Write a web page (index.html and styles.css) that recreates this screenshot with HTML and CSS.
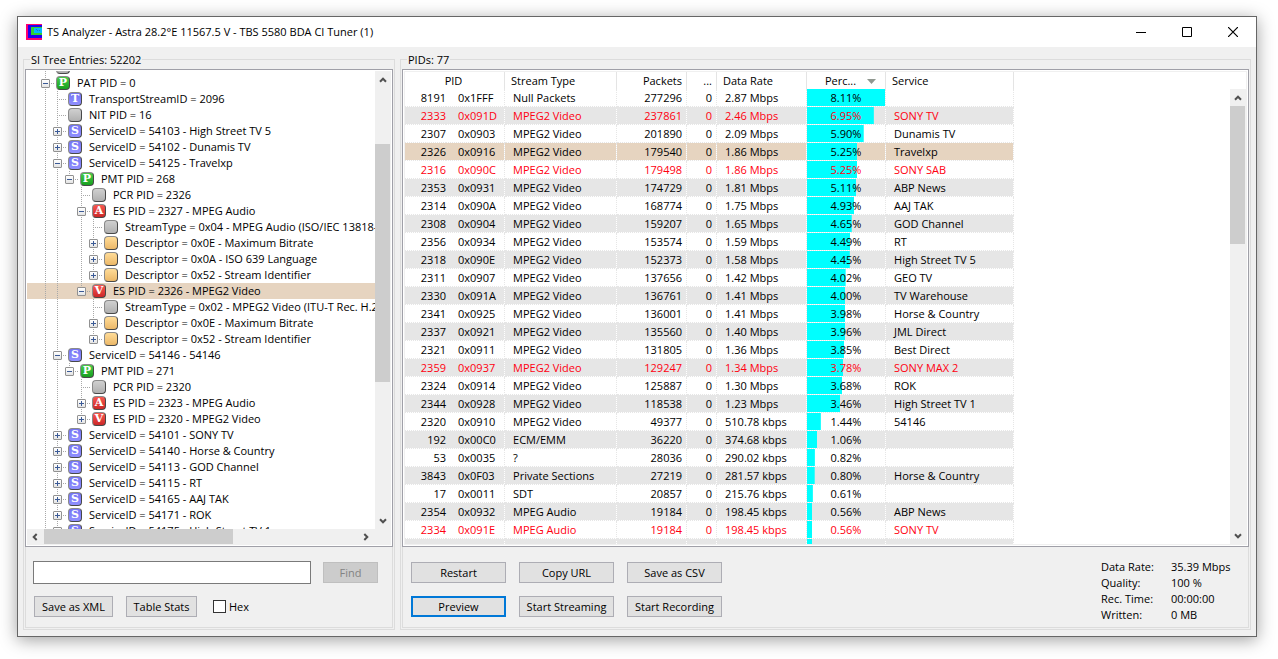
FILE: index.html
```html
<!DOCTYPE html>
<html lang="en">
<head>
    <meta charset="UTF-8">
    <meta name="viewport" content="width=device-width, initial-scale=1.0">
    <title>TS Analyzer</title>
    <link rel="stylesheet" href="styles.css">
</head>
<body>
<svg class="defs" width="0" height="0">
    <symbol id="chevron" viewBox="0 0 8 6"><path d="M1 4.7 L4 1.7 L7 4.7" fill="none" stroke="#505050" stroke-width="2"/></symbol>
</svg>
<div class="window">
    <header class="titlebar">
        <svg class="app-icon" width="16" height="16" viewBox="0 0 16 16" shape-rendering="crispEdges">
            <rect width="16" height="16" fill="#ff0070"/>
            <rect x="2" y="1" width="14" height="13" fill="#2000f0"/>
            <rect x="5" y="3" width="11" height="8" fill="#30d030"/>
            <rect x="8" y="4" width="8" height="5" fill="#00b8ff"/>
            <path d="M10 5h1v1h1v1h-1v-1h-1zM13 6h1v1h-1z" fill="#2070d0"/>
        </svg>
        <h1>TS Analyzer - Astra 28.2°E 11567.5 V - TBS 5580 BDA CI Tuner (1)</h1>
        <button class="caption" aria-label="Minimize"><svg width="10" height="10"><path d="M0 5.5h10" stroke="#000"/></svg></button>
        <button class="caption" aria-label="Maximize"><svg width="10" height="10"><path d="M.5 .5h9v9h-9z" fill="none" stroke="#000"/></svg></button>
        <button class="caption" aria-label="Close"><svg width="10" height="10"><path d="M0 0l10 10M10 0L0 10" stroke="#000" stroke-width="1.2"/></svg></button>
    </header>

    <main>
        <fieldset class="group si">
            <legend>SI Tree Entries: 52202</legend>
            <div class="tree-box">
                <div class="tree-row">
                    <div class="tree-view"><ul class="tree" id="tree"></ul></div>
                    <div class="scroll">
                        <button aria-label="Scroll up"><svg width="8" height="6"><use href="#chevron"/></svg></button>
                        <div class="track tree-v"><span class="thumb"></span></div>
                        <button aria-label="Scroll down"><svg class="down" width="8" height="6"><use href="#chevron"/></svg></button>
                    </div>
                </div>
                <div class="scroll horizontal">
                    <button aria-label="Scroll left"><svg class="left" width="8" height="6"><use href="#chevron"/></svg></button>
                    <div class="track"><span class="thumb"></span></div>
                    <button aria-label="Scroll right"><svg class="right" width="8" height="6"><use href="#chevron"/></svg></button>
                </div>
            </div>
            <div class="panel search">
                <div class="find">
                    <input type="text" aria-label="Search text">
                    <button class="btn" disabled>Find</button>
                </div>
                <div class="tools">
                    <button class="btn">Save as XML</button>
                    <button class="btn">Table Stats</button>
                    <label><input type="checkbox">Hex</label>
                </div>
            </div>
        </fieldset>

        <fieldset class="group pids">
            <legend>PIDs: 77</legend>
            <div class="list-box">
                <div class="list">
                    <table>
                        <colgroup>
                            <col class="c-pid"><col class="c-hex"><col class="c-type"><col class="c-packets">
                            <col class="c-err"><col class="c-rate"><col class="c-percent"><col class="c-service">
                        </colgroup>
                        <thead>
                            <tr>
                                <th colspan="2" class="center">PID</th>
                                <th>Stream Type</th>
                                <th class="num">Packets</th>
                                <th class="num">...</th>
                                <th>Data Rate</th>
                                <th class="sorted">Perc...<svg width="9" height="5"><path d="M0 0h9L4.500 5z" fill="#909890"/></svg></th>
                                <th>Service</th>
                            </tr>
                        </thead>
                        <tbody id="pids"></tbody>
                    </table>
                    <div class="scroll">
                        <button aria-label="Scroll up"><svg width="8" height="6"><use href="#chevron"/></svg></button>
                        <div class="track list-v"><span class="thumb"></span></div>
                        <button aria-label="Scroll down"><svg class="down" width="8" height="6"><use href="#chevron"/></svg></button>
                    </div>
                </div>
            </div>
            <div class="panel actions">
                <div class="buttons">
                    <button class="btn">Restart</button>
                    <button class="btn">Copy URL</button>
                    <button class="btn">Save as CSV</button>
                    <button class="btn default">Preview</button>
                    <button class="btn">Start Streaming</button>
                    <button class="btn">Start Recording</button>
                </div>
                <dl class="stats">
                    <dt>Data Rate:</dt><dd>35.39 Mbps</dd>
                    <dt>Quality:</dt><dd>100 %</dd>
                    <dt>Rec. Time:</dt><dd>00:00:00</dd>
                    <dt>Written:</dt><dd>0 MB</dd>
                </dl>
            </div>
        </fieldset>
    </main>
</div>

<script>
    // first string: one character per level, | = line, . = empty, last one is the node itself
    // t = leaf, + collapsed, - expanded, * and = are the same for the last child
    const nodes = [
        ['t', '', ''],
        ['-', 'P', 'PAT PID = 0'],
        ['|t', 'T', 'TransportStreamID = 2096'],
        ['|t', '', 'NIT PID = 16'],
        ['|+', 'S', 'ServiceID = 54103 - High Street TV 5'],
        ['|+', 'S', 'ServiceID = 54102 - Dunamis TV'],
        ['|-', 'S', 'ServiceID = 54125 - Travelxp'],
        ['||=', 'P', 'PMT PID = 268'],
        ['||.t', '', 'PCR PID = 2326'],
        ['||.-', 'A', 'ES PID = 2327 - MPEG Audio'],
        ['||.|t', '', 'StreamType = 0x04 - MPEG Audio (ISO/IEC 13818-3)'],
        ['||.|+', 'D', 'Descriptor = 0x0E - Maximum Bitrate'],
        ['||.|+', 'D', 'Descriptor = 0x0A - ISO 639 Language'],
        ['||.|*', 'D', 'Descriptor = 0x52 - Stream Identifier'],
        ['||.=', 'V', 'ES PID = 2326 - MPEG2 Video', true],
        ['||..t', '', 'StreamType = 0x02 - MPEG2 Video (ITU-T Rec. H.262)'],
        ['||..+', 'D', 'Descriptor = 0x0E - Maximum Bitrate'],
        ['||..*', 'D', 'Descriptor = 0x52 - Stream Identifier'],
        ['|-', 'S', 'ServiceID = 54146 - 54146'],
        ['||=', 'P', 'PMT PID = 271'],
        ['||.t', '', 'PCR PID = 2320'],
        ['||.+', 'A', 'ES PID = 2323 - MPEG Audio'],
        ['||.*', 'V', 'ES PID = 2320 - MPEG2 Video'],
        ['|+', 'S', 'ServiceID = 54101 - SONY TV'],
        ['|+', 'S', 'ServiceID = 54140 - Horse & Country'],
        ['|+', 'S', 'ServiceID = 54113 - GOD Channel'],
        ['|+', 'S', 'ServiceID = 54115 - RT'],
        ['|+', 'S', 'ServiceID = 54165 - AAJ TAK'],
        ['|+', 'S', 'ServiceID = 54171 - ROK'],
        ['|+', 'S', 'ServiceID = 54175 - High Street TV 1']
    ];

    // pid, hex, type, packets, rate, percent, service, encrypted
    const pids = [
        [8191, '0x1FFF', 'Null Packets', 277296, '2.87 Mbps', 8.11, ''],
        [2333, '0x091D', 'MPEG2 Video', 237861, '2.46 Mbps', 6.95, 'SONY TV', true],
        [2307, '0x0903', 'MPEG2 Video', 201890, '2.09 Mbps', 5.90, 'Dunamis TV'],
        [2326, '0x0916', 'MPEG2 Video', 179540, '1.86 Mbps', 5.25, 'Travelxp'],
        [2316, '0x090C', 'MPEG2 Video', 179498, '1.86 Mbps', 5.25, 'SONY SAB', true],
        [2353, '0x0931', 'MPEG2 Video', 174729, '1.81 Mbps', 5.11, 'ABP News'],
        [2314, '0x090A', 'MPEG2 Video', 168774, '1.75 Mbps', 4.93, 'AAJ TAK'],
        [2308, '0x0904', 'MPEG2 Video', 159207, '1.65 Mbps', 4.65, 'GOD Channel'],
        [2356, '0x0934', 'MPEG2 Video', 153574, '1.59 Mbps', 4.49, 'RT'],
        [2318, '0x090E', 'MPEG2 Video', 152373, '1.58 Mbps', 4.45, 'High Street TV 5'],
        [2311, '0x0907', 'MPEG2 Video', 137656, '1.42 Mbps', 4.02, 'GEO TV'],
        [2330, '0x091A', 'MPEG2 Video', 136761, '1.41 Mbps', 4.00, 'TV Warehouse'],
        [2341, '0x0925', 'MPEG2 Video', 136001, '1.41 Mbps', 3.98, 'Horse & Country'],
        [2337, '0x0921', 'MPEG2 Video', 135560, '1.40 Mbps', 3.96, 'JML Direct'],
        [2321, '0x0911', 'MPEG2 Video', 131805, '1.36 Mbps', 3.85, 'Best Direct'],
        [2359, '0x0937', 'MPEG2 Video', 129247, '1.34 Mbps', 3.78, 'SONY MAX 2', true],
        [2324, '0x0914', 'MPEG2 Video', 125887, '1.30 Mbps', 3.68, 'ROK'],
        [2344, '0x0928', 'MPEG2 Video', 118538, '1.23 Mbps', 3.46, 'High Street TV 1'],
        [2320, '0x0910', 'MPEG2 Video', 49377, '510.78 kbps', 1.44, '54146'],
        [192, '0x00C0', 'ECM/EMM', 36220, '374.68 kbps', 1.06, ''],
        [53, '0x0035', '?', 28036, '290.02 kbps', 0.82, ''],
        [3843, '0x0F03', 'Private Sections', 27219, '281.57 kbps', 0.80, 'Horse & Country'],
        [17, '0x0011', 'SDT', 20857, '215.76 kbps', 0.61, ''],
        [2354, '0x0932', 'MPEG Audio', 19184, '198.45 kbps', 0.56, 'ABP News'],
        [2334, '0x091E', 'MPEG Audio', 19184, '198.45 kbps', 0.56, 'SONY TV', true],
        [2360, '0x0938', 'MPEG Audio', 19183, '198.44 kbps', 0.56, 'SONY MAX 2', true]
    ];
    const selectedPid = 2326;
    const maxPercent = pids[0][5];

    function escapeText(s) {
        return String(s).replace(/&/g, '&amp;');
    }

    function guide(ch) {
        if (ch === '.') return '<span class="guide"></span>';
        if (ch === '|') return '<span class="guide line"></span>';
        const last = ch === '=' || ch === '*' ? ' last' : '';
        let box = '';
        if (ch === '+' || ch === '*') box = '<button class="expander plus" aria-label="Expand"></button>';
        if (ch === '-' || ch === '=') box = '<button class="expander" aria-label="Collapse"></button>';
        return `<span class="guide line node${last}">${box}</span>`;
    }

    document.getElementById('tree').innerHTML = nodes.map(([guides, icon, label, selected]) => `
        <li class="${selected ? 'selected' : ''}">
            ${[...guides].map(guide).join('')}<span class="icon icon-${icon || 'none'}">${icon === 'D' ? '' : icon}</span><span class="label">${escapeText(label)}</span>
        </li>`).join('');

    document.getElementById('pids').innerHTML = pids.map(([pid, hex, type, packets, rate, percent, service, encrypted]) => `
        <tr class="${pid === selectedPid ? 'selected' : ''} ${encrypted ? 'encrypted' : ''}">
            <td class="num pid">${pid}</td><td class="hex">${hex}</td><td>${type}</td>
            <td class="num">${packets}</td><td class="num">0</td><td>${rate}</td>
            <td class="percent" style="background-size: ${percent / maxPercent * 100}% 100%">${percent.toFixed(2)}%</td>
            <td>${escapeText(service)}</td>
        </tr>`).join('');
</script>
</body>
</html>
```
FILE: styles.css
```css
* {
    box-sizing: border-box;
}
body {
    margin: 0;
    height: 100vh;
    padding: 16px 21px 22px 17px;
    background: white;
    color: black;
    font-family: "Open Sans", "Noto Sans", sans-serif;
    font-size: 11px;
    line-height: 16px;
    overflow: hidden;
}
button, input {
    font: inherit;
    color: inherit;
}
.defs {
    position: absolute;
}
.window {
    height: 100%;
    display: flex;
    flex-direction: column;
    background: #f0f0f0;
    border: 1px solid #666;
    box-shadow: 0 3px 16px rgba(0, 0, 0, 0.38);
}
.titlebar {
    display: flex;
    align-items: center;
    height: 30px;
    padding-left: 8px;
    background: white;
}
.titlebar h1 {
    flex: 1;
    margin: 0 0 0 5px;
    font-size: 11px;
    font-weight: normal;
}
.caption {
    display: flex;
    align-items: center;
    justify-content: center;
    width: 46px;
    height: 29px;
    padding: 0;
    border: none;
    background: none;
}
main {
    flex: 1;
    min-height: 0;
    display: flex;
    gap: 5px;
    padding: 5px 5px 6px;
}

/* group boxes */
.group {
    display: flex;
    flex-direction: column;
    min-width: 0;
    margin: 0;
    padding: 2px 1px 1px;
    border: 1px solid #dcdcdc;
}
.group legend {
    height: 15px;
    line-height: 15px;
    margin-left: 5px;
    padding: 0 1px;
}
.si {
    width: 372px;
}
.pids {
    flex: 1;
}
.panel {
    height: 81px;
    border: 1px solid #dcdcdc;
    border-top: none;
}
.tree-box, .list-box {
    flex: 1;
    min-height: 0;
    padding: 1px;
    background: white;
    border: 1px solid #a0a0a8;
}

/* tree */
.tree-box {
    display: flex;
    flex-direction: column;
}
.tree-row {
    flex: 1;
    min-height: 0;
    display: flex;
}
.tree-view {
    flex: 1;
    min-width: 0;
    overflow: hidden;
}
.tree {
    list-style: none;
    margin: -12px 0 0;
    padding: 0;
}
.tree li {
    display: flex;
    align-items: center;
    height: 16px;
    padding-left: 12px;
    white-space: nowrap;
    overflow: hidden;
}
.tree .selected, tbody tr.selected td {
    background-color: #e6d4c0;
}
.guide {
    flex: none;
    width: 12px;
    height: 16px;
    background-repeat: no-repeat;
}
.line {
    background-image: repeating-linear-gradient(#a8a8a8 0 1px, transparent 1px 2px);
    background-size: 1px 16px;
    background-position: 6px 0;
}
.node {
    display: flex;
    align-items: center;
    width: 17px;
    padding-left: 2px;
    background-image: repeating-linear-gradient(#a8a8a8 0 1px, transparent 1px 2px), repeating-linear-gradient(90deg, #a8a8a8 0 1px, transparent 1px 2px);
    background-size: 1px 16px, 10px 1px;
    background-position: 6px 0, 6px 8px;
}
.node.last {
    background-size: 1px 8px, 10px 1px;
}
.expander {
    width: 9px;
    height: 9px;
    padding: 0;
    border: 1px solid #919191;
    border-radius: 1px;
    background: linear-gradient(#3b5a96, #3b5a96) center / 5px 1px no-repeat, linear-gradient(white, #e4e4e4);
}
.plus {
    background: linear-gradient(#3b5a96, #3b5a96) center / 5px 1px no-repeat, linear-gradient(#3b5a96, #3b5a96) center / 1px 5px no-repeat, linear-gradient(white, #e4e4e4);
}
.icon {
    flex: none;
    width: 14px;
    height: 14px;
    margin-right: 7px;
    border: 1px solid #8a8a8a;
    border-right-color: #484848;
    border-bottom-color: #484848;
    border-radius: 4px;
    color: white;
    font-family: "DejaVu Serif", serif;
    font-size: 11px;
    font-weight: bold;
    line-height: 12px;
    display: flex;
    justify-content: center;
}
.icon-none {
    background: linear-gradient(#d0d0d0, #b0b0b0);
}
.icon-P {
    background: linear-gradient(#48cc48, #18a020);
}
.icon-T, .icon-S {
    background: linear-gradient(#7474f4, #9090ff);
}
.icon-A, .icon-V {
    background: linear-gradient(#f85850, #cc2828);
}
.icon-D {
    background: linear-gradient(#ffdc98, #ecb868);
}

/* scrollbars */
.scroll {
    flex: none;
    display: flex;
    flex-direction: column;
    width: 16px;
    background: #f0f0f0;
}
.scroll button {
    display: flex;
    align-items: center;
    justify-content: center;
    height: 17px;
    padding: 0 1px 0 0;
    border: none;
    background: none;
}
.scroll .down {
    transform: rotate(180deg);
}
.scroll .left {
    transform: rotate(-90deg);
}
.scroll .right {
    transform: rotate(90deg);
}
.track {
    flex: 1;
    display: grid;
}
.thumb {
    background: #cdcdcd;
}
.tree-v {
    grid-template-rows: 56fr 237fr 130fr;
    padding-right: 1px;
}
.tree-v .thumb, .list-v .thumb {
    grid-row: 2;
}
.list-v {
    grid-template-rows: 0 138fr 283fr;
    padding-right: 1px;
}
.horizontal {
    flex-direction: row;
    width: auto;
    height: 16px;
    padding-right: 16px;
}
.horizontal button {
    width: 17px;
    height: 16px;
}
.horizontal .track {
    grid-template-columns: 188fr 125fr;
    padding-bottom: 1px;
}

/* pid list */
.list {
    display: flex;
    height: 100%;
    overflow: hidden;
    border: 1px solid #f0f0f0;
}
.list .scroll {
    margin: 17px 0 0 auto;
}
table {
    flex: none;
    align-self: flex-start;
    width: 609px;
    table-layout: fixed;
    border-spacing: 0;
}
.c-pid { width: 41px; }
.c-hex { width: 59px; }
.c-type { width: 112px; }
.c-packets { width: 70px; }
.c-err { width: 30px; }
.c-rate { width: 90px; }
.c-percent { width: 79px; }
.c-service { width: 128px; }
th {
    height: 17px;
    padding: 0 6px;
    border-right: 1px solid #e4e4e4;
    font-weight: normal;
    line-height: 17px;
    text-align: left;
    white-space: nowrap;
}
td {
    height: 18px;
    padding: 0 8px;
    border-right: 1px dotted #e6e6e6;
    border-bottom: 1px dotted #e6e6e6;
    background-clip: padding-box;
    line-height: 17px;
    white-space: nowrap;
}
tbody tr:nth-child(even) td {
    background-color: #e6e6e6;
}
tbody tr.selected td {
    background-color: #e6d4c0;
}
.encrypted {
    color: #ff0010;
}
th.center {
    padding-right: 8px;
    text-align: center;
}
.num {
    padding: 0 4px;
    text-align: right;
}
td.pid {
    padding: 0;
    border-right: none;
}
td.hex {
    padding-left: 12px;
}
td.percent, th.sorted {
    padding: 0;
    text-align: center;
}
td.percent {
    background-image: linear-gradient(cyan, cyan);
    background-repeat: no-repeat;
}
.sorted svg {
    margin: 0 0 1px 11px;
}
th.sorted {
    padding-left: 9px;
}

/* bottom panels */
.btn {
    height: 21px;
    padding: 0;
    border: 1px solid #adadb4;
    background: #e1e1e1;
    line-height: 18px;
}
.btn:disabled {
    border-color: #bfbfbf;
    background: #ccc;
    color: #838383;
}
.default {
    border: 2px solid #0078d7;
    line-height: 16px;
}
.search {
    display: flex;
    flex-direction: column;
    gap: 12px;
    padding: 14px 14px 0 7px;
}
.find {
    display: flex;
    align-items: center;
    gap: 12px;
}
.find input {
    flex: 1;
    min-width: 0;
    height: 23px;
    padding: 0 4px;
    border: 1px solid #7a7a7a;
    background: white;
}
.find .btn {
    width: 55px;
}
.tools {
    display: flex;
    align-items: center;
    gap: 13px;
    padding-left: 1px;
}
.tools .btn {
    width: 79px;
}
.tools .btn + .btn {
    width: 71px;
}
.tools label {
    display: flex;
    align-items: center;
    gap: 3px;
    margin-left: 3px;
}
.tools input {
    appearance: none;
    width: 13px;
    height: 13px;
    margin: 0;
    border: 1px solid #333;
    background: white;
}
.tools input:checked {
    background: #333;
}
.actions {
    display: flex;
    justify-content: space-between;
    padding-left: 8px;
}
.buttons {
    display: grid;
    grid-template-columns: repeat(3, 95px);
    grid-auto-rows: 21px;
    gap: 13px;
    padding-top: 15px;
}
.stats {
    display: grid;
    grid-template-columns: 70px 77px;
    align-content: start;
    margin: 0;
    padding-top: 12px;
}
.stats dd {
    margin: 0;
}
```
